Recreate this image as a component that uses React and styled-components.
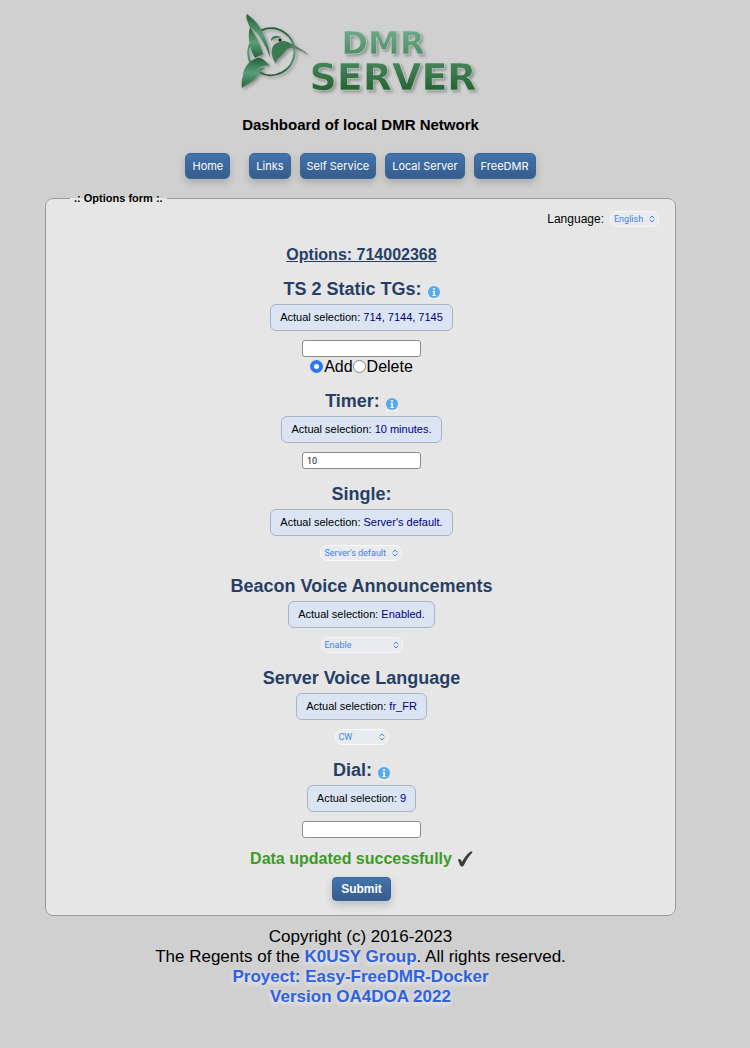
import React from "react";
import styled, { createGlobalStyle, css } from "styled-components";

const sans = `"Liberation Sans", Arial, sans-serif`;
const ui = `Inter, "Liberation Sans", sans-serif`;
const control = `Roboto, "Liberation Sans", sans-serif`;
const blueFace = css`
  border: 1px solid #3a679a;
  background: linear-gradient(#4274ad, #365c8c);
  color: #fff;
  box-shadow: 0 4px 8px rgba(0, 0, 0, 0.18);
`;

const GlobalStyle = createGlobalStyle`
  * { box-sizing: border-box; }
  body {
    margin: 0;
    background: #d0d0d0;
    color: #000;
    font-family: ${sans};
    font-size: 16px;
  }
`;

const Page = styled.div`
  display: flex;
  flex-direction: column;
  padding: 10px 74px 40px 45px;
`;

const Header = styled.header`
  display: flex;
  flex-direction: column;
  align-items: center;
`;

const LogoArt = styled.svg`
  display: block;
  width: 252px;
  height: 90px;
`;

const Title = styled.h1`
  margin: 15px 0 0;
  font-size: 15px;
  line-height: 20px;
`;

const Nav = styled.nav`
  display: flex;
  justify-content: center;
  gap: 9px;
  margin-top: 18px;
`;

const NavButton = styled.button`
  ${blueFace}
  height: 26px;
  padding: 0 6px;
  border-radius: 5px;
  font: 400 11px ${ui};
  &:first-child {
    margin-right: 10px;
  }
`;

const Panel = styled.fieldset`
  display: flex;
  flex-direction: column;
  min-width: 0;
  margin: 12px 0 0;
  padding: 6px 16px 14px 24px;
  border: 1px solid #999;
  border-radius: 8px;
  background: #e6e6e6;
`;

const Legend = styled.legend`
  padding: 0 4px;
  font-size: 11px;
  font-weight: bold;
  line-height: 14px;
`;

const LanguageRow = styled.div`
  display: flex;
  justify-content: flex-end;
  align-items: center;
  gap: 6px;
  font-size: 12px;
  line-height: 16px;
`;

const Form = styled.form`
  display: flex;
  flex-direction: column;
  align-items: center;
  margin: 18px 6px 0 0;
`;

const Device = styled.h2`
  margin: 0 0 11px;
  color: #263f66;
  font-size: 16px;
  line-height: 20px;
  text-decoration: underline;
`;

const Section = styled.section`
  display: flex;
  flex-direction: column;
  align-items: center;
  margin-bottom: ${(p) => (p.$last ? "11px" : "12px")};
`;

const Heading = styled.h3`
  display: flex;
  align-items: center;
  gap: 6px;
  margin: 0;
  color: #263f66;
  font-size: 18px;
  line-height: 26px;
`;

const Info = styled.span`
  display: flex;
  margin-top: 6px;
  border-bottom: 1px dotted #fff;
`;

const Current = styled.p`
  margin: 2px 0 9px;
  padding: 0 9px;
  border: 1px solid #a9b4c2;
  border-radius: 6px;
  background: #dae4f2;
  font-size: 11px;
  line-height: 25px;
`;

const Value = styled.span`
  color: #000080;
`;

const TextInput = styled.input`
  width: 119px;
  height: 17px;
  padding: 0 4px;
  border: 1px solid #8c8c8c;
  border-radius: 3px;
  background: #fff;
  color: #222;
  font: 9px ${control};
`;

const RadioRow = styled.div`
  display: flex;
  align-items: center;
  height: 19px;
`;

const RadioLabel = styled.label`
  display: flex;
  align-items: center;
  line-height: 19px;
`;

const Radio = styled.input`
  appearance: none;
  width: 13px;
  height: 13px;
  margin: 0 1px 0 0;
  border: 1px solid #858585;
  border-radius: 50%;
  background: #fff;
  &:checked {
    border: 4px solid #2f77f0;
  }
`;

const SelectWrap = styled.span`
  position: relative;
  display: flex;
  width: ${(p) => p.$width};
`;

const SelectBox = styled.select`
  appearance: none;
  width: 100%;
  height: 16px;
  padding: 0 3px;
  border: 1px solid #f8f8f8;
  border-radius: 7px;
  background: #eaebee;
  color: #3f82e8;
  font: 9px ${control};
`;

const Chevrons = styled.svg`
  position: absolute;
  top: 4px;
  right: 4px;
  width: 6px;
  height: 8px;
  pointer-events: none;
`;

const Success = styled.p`
  display: flex;
  align-items: center;
  gap: 5px;
  margin: 0 0 8px;
  color: #3d9b27;
  font-size: 16px;
  font-weight: bold;
  line-height: 20px;
`;

const Submit = styled.button`
  ${blueFace}
  height: 24px;
  padding: 0 8px;
  border-radius: 4px;
  font: bold 12px ${sans};
`;

const Footer = styled.footer`
  margin-top: 11px;
  font-size: 17px;
  line-height: 20px;
  text-align: center;
`;

const FooterLink = styled.a`
  color: #2f62e0;
  font-weight: bold;
  text-decoration: none;
  text-shadow: 0 2px 5px #f4f4f4;
`;

function Logo() {
  return (
    <LogoArt viewBox="0 0 252 90" role="img" aria-label="DMR Server">
      <defs>
        <linearGradient id="bird" x1="0" y1="0" x2="0" y2="1">
          <stop offset="0" stopColor="#24603a" />
          <stop offset="0.5" stopColor="#5a9e79" />
          <stop offset="1" stopColor="#24603a" />
        </linearGradient>
        <linearGradient id="words" gradientUnits="userSpaceOnUse" x1="0" y1="20" x2="0" y2="82">
          <stop offset="0" stopColor="#6fa98b" />
          <stop offset="1" stopColor="#23622f" />
        </linearGradient>
        <filter id="shade" x="-10%" y="-10%" width="125%" height="130%">
          <feDropShadow dx="2" dy="2" stdDeviation="1.5" floodColor="#555" floodOpacity="0.5" />
        </filter>
      </defs>
      <g filter="url(#shade)">
        <path
          d="M26 20.500 A23.500 23.500 0 1 1 24 62 M15 34 Q11 44 16 54"
          fill="none"
          stroke="url(#bird)"
          strokeWidth="2"
        />
        <path d="M12 4 C17 8 21 12 24 16 C29 25 34 34 35 47 C31 37 27 29 21 22 C17 18 14 18 13 12 C11 9 11 6 12 4Z" fill="url(#bird)" />
        <path d="M15 17 C20 25 25 33 28 44 C25 46 22 46 20 48 C15 39 12 28 15 17Z" fill="url(#bird)" />
        <path d="M8 66 C8 59 13 51 22 48 C27 47 31 52 35 56 C28 54 21 59 13 67 C20 60 25 57 30 58 C24 62 23 66 20 69 C16 73 11 74 7 78 C6 73 7 69 8 66Z" fill="url(#bird)" />
        <path d="M36 29 C38 25 44 25 46 28 C42 27 39 28 36 31Z" fill="#3b7c57" />
        <path d="M37 40 C37 34 43 32 48 31 C52 31 55 33 58 35 C63 37 68 40 73 45 C66 40 60 37 55 38 C50 39 50 43 45 47 C42 49 41 51 41 54 C38 49 36 45 37 40Z" fill="#3a7a52" />
        <path d="M57 35 C63 37 68 40 73 45 C66 40 60 38 56 38Z" fill="#6d7a73" />
        <circle cx="45" cy="30" r="1.500" fill="#111" />
      </g>
      <g
        filter="url(#shade)"
        fill="url(#words)"
        stroke="#c4d6cb"
        strokeWidth="0.500"
        fontFamily="'DejaVu Sans', sans-serif"
        fontWeight="bold"
        textAnchor="middle"
      >
        <text x="148" y="44" fontSize="32">DMR</text>
        <text x="158" y="80" fontSize="38">SERVER</text>
      </g>
    </LogoArt>
  );
}

function InfoIcon() {
  return (
    <Info title="Information">
      <svg width="12" height="12" viewBox="0 0 12 12" aria-hidden="true">
        <circle cx="6" cy="6" r="6" fill="#55a9ee" />
        <path d="M4.500 5H7V9H8V10H4.300V9H5.300V6H4.500Z" fill="#fff" />
        <circle cx="6" cy="3" r="1.100" fill="#fff" />
      </svg>
    </Info>
  );
}

function Select({ width, current, ...rest }) {
  return (
    <SelectWrap $width={width}>
      <SelectBox {...rest}>
        <option>{current}</option>
      </SelectBox>
      <Chevrons viewBox="0 0 6 8" aria-hidden="true">
        <path d="M1 3L3 1L5 3M1 5L3 7L5 5" fill="none" stroke="#3f82e8" strokeLinecap="round" strokeLinejoin="round" />
      </Chevrons>
    </SelectWrap>
  );
}

function OptionSection({ title, value, info, last, children }) {
  return (
    <Section $last={last}>
      <Heading>
        {title}
        {info && <InfoIcon />}
      </Heading>
      <Current>
        Actual selection: <Value>{value}</Value>
      </Current>
      {children}
    </Section>
  );
}

const pages = ["Home", "Links", "Self Service", "Local Server", "FreeDMR"];

export default function App() {
  return (
    <>
      <GlobalStyle />
      <Page>
        <Header>
          <Logo />
          <Title>Dashboard of local DMR Network</Title>
          <Nav>
            {pages.map((name) => (
              <NavButton key={name} type="button">{name}</NavButton>
            ))}
          </Nav>
        </Header>
        <Panel>
          <Legend>.: Options form :.</Legend>
          <LanguageRow>
            <label htmlFor="language">Language:</label>
            <Select id="language" width="49px" current="English" />
          </LanguageRow>
          <Form onSubmit={(e) => e.preventDefault()}>
            <Device>Options: 714002368</Device>
            <OptionSection title="TS 2 Static TGs:" value="714, 7144, 7145" info>
              <TextInput type="text" aria-label="TS 2 Static TGs" />
              <RadioRow>
                <RadioLabel><Radio type="radio" name="action" defaultChecked />Add</RadioLabel>
                <RadioLabel><Radio type="radio" name="action" />Delete</RadioLabel>
              </RadioRow>
            </OptionSection>
            <OptionSection title="Timer:" value="10 minutes." info>
              <TextInput type="text" defaultValue="10" aria-label="Timer" />
            </OptionSection>
            <OptionSection title="Single:" value="Server's default.">
              <Select width="82px" current="Server's default" aria-label="Single" />
            </OptionSection>
            <OptionSection title="Beacon Voice Announcements" value="Enabled.">
              <Select width="82px" current="Enable" aria-label="Beacon Voice Announcements" />
            </OptionSection>
            <OptionSection title="Server Voice Language" value="fr_FR">
              <Select width="54px" current="CW" aria-label="Server Voice Language" />
            </OptionSection>
            <OptionSection title="Dial:" value="9" info last>
              <TextInput type="text" aria-label="Dial" />
            </OptionSection>
            <Success>
              Data updated successfully
              <svg width="16" height="16" viewBox="0 0 16 16" aria-hidden="true">
                <path d="M1 9C2 7 4 8 5 11C7 7 10 3 13 1C15 0 16 1 15 2C11 6 9 10 7 14C6 16 4 16 3 14Z" fill="#3c3c3e" />
              </svg>
            </Success>
            <Submit type="submit">Submit</Submit>
          </Form>
        </Panel>
        <Footer>
          Copyright (c) 2016-2023
          <br />
          The Regents of the <FooterLink href="#group">K0USY Group</FooterLink>. All rights reserved.
          <br />
          <FooterLink href="#project">Proyect: Easy-FreeDMR-Docker</FooterLink>
          <br />
          <FooterLink href="#version">Version OA4DOA 2022</FooterLink>
        </Footer>
      </Page>
    </>
  );
}
